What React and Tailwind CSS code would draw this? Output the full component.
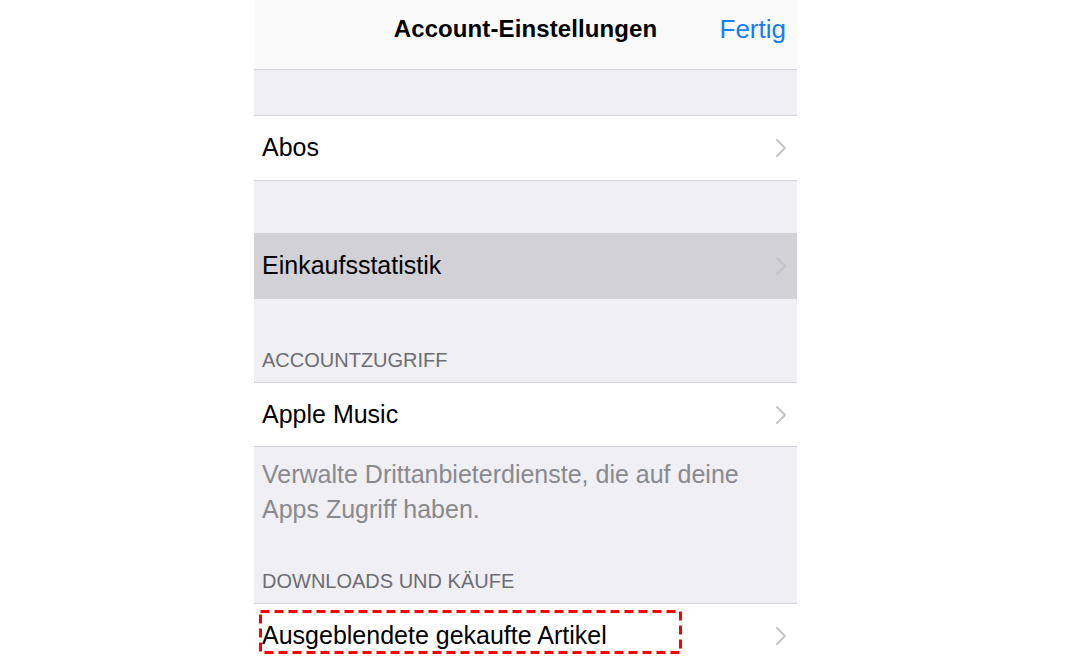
import React from "react";

const Chevron = () => (
  <svg width="12" height="20" viewBox="0 0 12 20" className="shrink-0">
    <path d="M2 2 L10 10 L2 18" fill="none" stroke="#c4c4c8" strokeWidth="2" strokeLinecap="round" strokeLinejoin="round" />
  </svg>
);

const Row = ({ label, highlight, h = "h-[64px]", children }) => (
  <div
    className={`relative flex items-center justify-between ${h} pl-[8px] pr-[10px] shrink-0 ${highlight ? "bg-[#d1d1d6]" : "bg-white"}`}
  >
    <span className="text-[25px] text-black">{label}</span>
    <Chevron />
    {children}
  </div>
);

export default function App() {
  return (
    <div className="w-[1086px] h-[657px] bg-white flex overflow-hidden" style={{ fontFamily: '"Liberation Sans", Arial, sans-serif' }}>
      <div className="w-[543px] ml-[254px] flex flex-col bg-[#efeff4]">
        <div className="h-[70px] bg-[#fafafa] border-b border-[#d4d4d8] flex items-center justify-center relative shrink-0 pb-[12px]">
          <span className="text-[24px] font-semibold text-black tracking-[0.1px]">Account-Einstellungen</span>
          <span className="absolute right-[11px] top-[12px] text-[26px] leading-[34px] text-[#147efb]">Fertig</span>
        </div>
        <div className="h-[46px] border-b border-[#d4d4d8] shrink-0" />
        <div className="border-b border-[#d4d4d8] shrink-0">
          <Row label="Abos" />
        </div>
        <div className="h-[52px] shrink-0" />
        <Row label="Einkaufsstatistik" highlight h="h-[66px]" />
        <div className="h-[84px] flex items-end pl-[8px] pb-[7px] border-b border-[#d4d4d8] shrink-0">
          <span className="text-[20px] leading-[30px] text-[#6d6d72]">ACCOUNTZUGRIFF</span>
        </div>
        <div className="border-b border-[#d4d4d8] shrink-0">
          <Row label="Apple Music" h="h-[63px]" />
        </div>
        <div className="pl-[8px] pr-[10px] pt-[10px] text-[25px] leading-[35px] text-[#8a8a8e] shrink-0">
          Verwalte Drittanbieterdienste, die auf deine Apps Zugriff haben.
        </div>
        <div className="h-[77px] flex items-end pl-[8px] pb-[7px] border-b border-[#d4d4d8] shrink-0">
          <span className="text-[20px] leading-[30px] text-[#6d6d72]">DOWNLOADS UND KÄUFE</span>
        </div>
        <Row label="Ausgeblendete gekaufte Artikel" h="h-[64px]">
          <svg className="absolute left-[5px] top-[6px]" width="423" height="44" viewBox="0 0 423 44">
            <rect x="1.5" y="1.5" width="420" height="41" fill="none" stroke="#ff0000" strokeWidth="3" strokeDasharray="9 5" />
          </svg>
        </Row>
      </div>
    </div>
  );
}
